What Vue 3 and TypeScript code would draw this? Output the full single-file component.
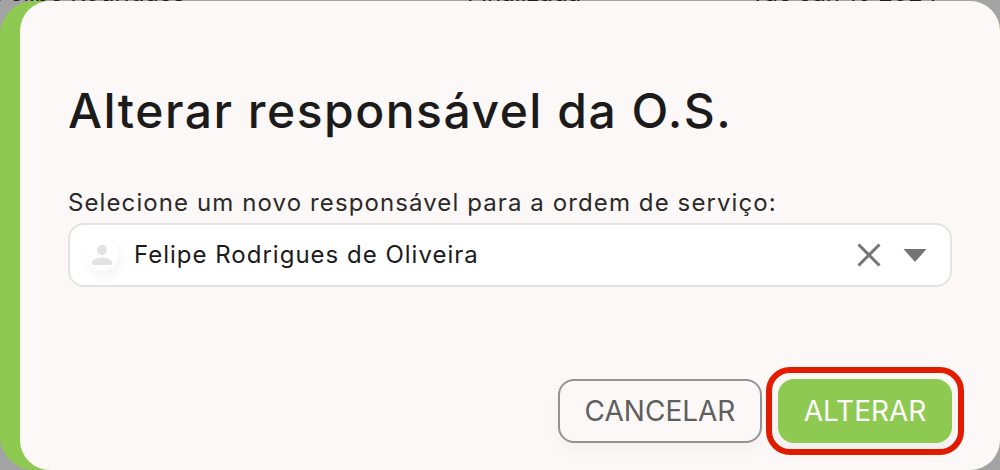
<script setup lang="ts">
const title = 'Alterar responsável da O.S.'
const label = 'Selecione um novo responsável para a ordem de serviço:'
const selected = 'Felipe Rodrigues de Oliveira'
</script>

<template>
  <div class="screen">
    <div class="backdrop-row">
      <span class="bg-name">Felipe Rodrigues</span>
      <span class="bg-status">Finalizada</span>
      <span class="bg-date">Tue Jan 16 2024</span>
    </div>
    <section class="dialog">
      <div class="panel">
        <h1 class="title">{{ title }}</h1>
        <label class="label">{{ label }}</label>
        <div class="select">
          <span class="avatar">
            <svg viewBox="0 0 24 24" width="30" height="30" aria-hidden="true">
              <path fill="#e3e3e3" d="M12 12c2.21 0 4-1.79 4-4s-1.79-4-4-4-4 1.79-4 4 1.79 4 4 4zm0 2c-2.67 0-8 1.34-8 4v2h16v-2c0-2.66-5.33-4-8-4z" />
            </svg>
          </span>
          <span class="value">{{ selected }}</span>
          <svg class="clear" viewBox="0 0 24 24" width="24" height="24" aria-hidden="true">
            <path fill="none" stroke="#757575" stroke-width="3" d="M1.5 1.5l21 21M22.5 1.5l-21 21" />
          </svg>
          <svg class="caret" viewBox="0 0 24 13" width="24" height="13" aria-hidden="true">
            <path fill="#757575" d="M0.5 0h23L12 13z" />
          </svg>
        </div>
        <div class="actions">
          <button class="btn cancel" type="button">CANCELAR</button>
          <span class="highlight">
            <button class="btn confirm" type="button">ALTERAR</button>
          </span>
        </div>
      </div>
    </section>
  </div>
</template>

<style>
html,
body {
  margin: 0;
  background: #a3a3a3;
}
</style>

<style scoped>
.screen {
  position: relative;
  width: 1000px;
  height: 470px;
  overflow: hidden;
  background: #a3a3a3;
  font-family: Inter, "Liberation Sans", sans-serif;
}

.backdrop-row {
  position: absolute;
  top: -17px;
  left: 0;
  width: 100%;
  height: 20px;
  font-size: 24px;
  line-height: 20px;
  color: #1c1c1c;
}

.bg-name,
.bg-status,
.bg-date {
  position: absolute;
  top: 0;
  white-space: nowrap;
}

.bg-name {
  left: -4px;
}

.bg-status {
  left: 467px;
}

.bg-date {
  left: 750px;
}

.dialog {
  position: absolute;
  top: 1px;
  left: 0;
  width: 1000px;
  height: 469px;
  box-sizing: border-box;
  padding-left: 20px;
  background: #8ec951;
  border-radius: 34px 30px 30px 34px;
}

.panel {
  display: flex;
  flex-direction: column;
  box-sizing: border-box;
  height: 100%;
  padding: 84px 48px 15px;
  background: #fcf8f7;
  border-radius: 30px;
}

.title {
  margin: 0;
  font-size: 48px;
  line-height: 52px;
  font-weight: 450;
  letter-spacing: 1.5px;
  color: #1c1b1b;
}

.label {
  margin-top: 52px;
  font-size: 24px;
  line-height: 28px;
  font-weight: 400;
  letter-spacing: 1.1px;
  color: #2b2a2a;
}

.select {
  display: flex;
  align-items: center;
  box-sizing: border-box;
  height: 64px;
  margin-top: 6px;
  padding: 0 23px 0 16px;
  background: #fff;
  border: 2px solid #e3e3e3;
  border-radius: 16px;
}

.avatar {
  display: flex;
  align-items: center;
  justify-content: center;
  width: 32px;
  height: 32px;
  border-radius: 50%;
  background: #fff;
  box-shadow: 3px 5px 12px rgba(0, 0, 0, 0.05);
}

.value {
  flex: 1;
  margin-left: 16px;
  padding-bottom: 2px;
  font-size: 24px;
  letter-spacing: 1px;
  color: #1c1b1b;
}

.clear {
  margin-right: 22px;
}

.actions {
  display: flex;
  align-items: center;
  justify-content: flex-end;
  gap: 4px;
  margin-top: auto;
  margin-right: -12px;
}

.btn {
  box-sizing: border-box;
  height: 64px;
  font-family: inherit;
  font-size: 28px;
  border-radius: 16px;
  cursor: pointer;
}

.cancel {
  width: 204px;
  background: transparent;
  border: 2px solid #939393;
  color: #5f5f5f;
  box-shadow: 0 8px 16px rgba(0, 0, 0, 0.03);
}

.highlight {
  display: flex;
  padding: 6px;
  border: 6px solid #e31c00;
  border-radius: 24px;
}

.confirm {
  width: 174px;
  background: #8ec951;
  border: 0;
  color: #fff;
  box-shadow: 0 8px 16px rgba(0, 0, 0, 0.05);
}
</style>
